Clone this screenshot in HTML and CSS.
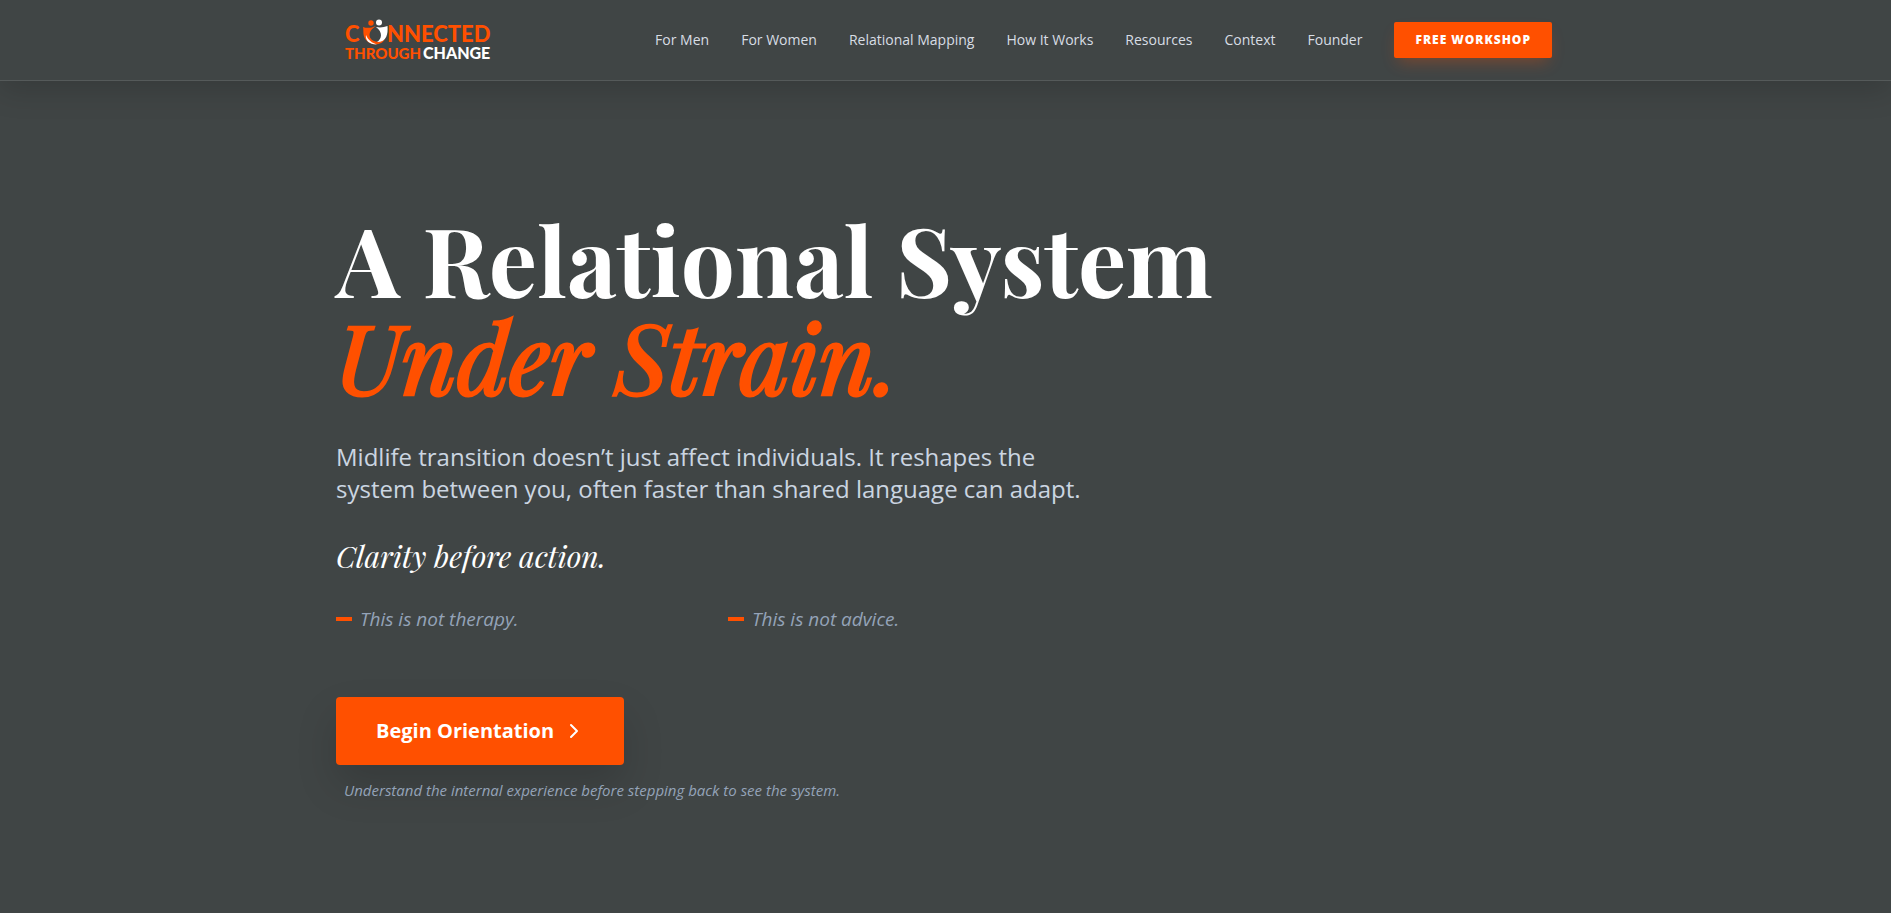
FILE: index.html
```html
<!DOCTYPE html>
<html lang="en">
<head>
    <meta charset="UTF-8">
    <meta name="viewport" content="width=device-width, initial-scale=1.0">
    <link rel="stylesheet" href="styles.css">
    <title>Connected Through Change</title>
</head>
<body>

<header class="site-header">
    <div class="container header-row">
        <a href="#" class="logo" aria-label="Connected Through Change">
            <svg width="160" height="48" viewBox="0 0 160 48">
                <g class="logo-top">
                    <text x="9" y="26">C</text>
                    <text x="51" y="26">NNECTED</text>
                </g>
                <text class="logo-bottom" x="9" y="43">THROUGH</text>
                <text class="logo-bottom light" x="87" y="43">CHANGE</text>
                <circle cx="35" cy="7" r="2.7" fill="#ff5000"/>
                <circle cx="43" cy="6.5" r="3" fill="#fff"/>
                <path d="M27 11C31 12.5 35 12 40 10C35 13 32.5 17 34 21.5C37 27 45 27 49 23C46 29.5 36 30 31 25C26 20 28 15 27 11Z" fill="#ff5000"/>
                <path d="M40 11C45 12 48 11 51.5 10C52 18 51 26 41 26C46 23 47 16 40 11Z" fill="#fff"/>
                <path d="M30 19C29 24 33 28.5 41 28.5C36 27 32 24 30 19Z" fill="#fff"/>
            </svg>
        </a>
        <nav class="nav">
            <a href="#">For Men</a>
            <a href="#">For Women</a>
            <a href="#">Relational Mapping</a>
            <a href="#">How It Works</a>
            <a href="#">Resources</a>
            <a href="#">Context</a>
            <a href="#">Founder</a>
            <a href="#" class="workshop">FREE WORKSHOP</a>
        </nav>
    </div>
</header>

<main class="hero">
    <div class="container">
        <h1>A Relational System <em>Under Strain.</em></h1>
        <p class="lead">Midlife transition doesn’t just affect individuals. It reshapes the system between you, often faster than shared language can adapt.</p>
        <p class="tagline">Clarity before action.</p>
        <ul class="nots">
            <li>This is not therapy.</li>
            <li>This is not advice.</li>
        </ul>
        <button type="button" class="begin">
            Begin Orientation
            <svg width="20" height="20" viewBox="0 0 20 20" fill="none" stroke="currentColor" stroke-width="2" stroke-linecap="round" stroke-linejoin="round">
                <path d="m7 16 6-6-6-6"/>
            </svg>
        </button>
        <p class="note">Understand the internal experience before stepping back to see the system.</p>
    </div>
</main>

</body>
</html>
```

FILE: styles.css
```css
* {
    box-sizing: border-box;
}

body {
    margin: 0;
    min-height: 100vh;
    background-color: #404545;
    color: white;
    font-family: "Open Sans", sans-serif;
}

h1, p, ul {
    margin: 0;
}

.container {
    max-width: 1280px;
    margin: 0 auto;
    padding: 0 32px;
}

.site-header,
.hero {
    padding-right: 3px;
}

.site-header {
    border-bottom: 1px solid #555a5a;
    box-shadow: 0 10px 30px rgba(0, 0, 0, 0.15);
}

.header-row {
    display: flex;
    align-items: center;
    justify-content: space-between;
    height: 80px;
}

.logo svg {
    display: block;
}

.logo text {
    font-family: Lato, sans-serif;
    font-weight: 900;
    fill: #ff5000;
}

.logo-top text {
    font-size: 22px;
}

.logo .logo-bottom {
    font-size: 15px;
}

.logo .light {
    font-size: 16px;
    fill: white;
}

.nav {
    display: flex;
    align-items: center;
    gap: 32px;
}

.nav a {
    color: #d8dde4;
    font-size: 14px;
    font-weight: 500;
    line-height: 20px;
    text-decoration: none;
}

.nav .workshop {
    padding: 10px 21px;
    border-radius: 2px;
    background-color: #ff5000;
    box-shadow: 0 8px 16px -4px rgba(255, 80, 0, 0.3);
    color: white;
    font-size: 12px;
    font-weight: 800;
    line-height: 16px;
    letter-spacing: 1px;
}

.hero {
    padding-top: 129px;
    padding-bottom: 64px;
}

h1 {
    font-family: "Playfair Display", "Liberation Serif", serif;
    font-size: 96px;
    font-weight: 700;
    line-height: 97px;
}

h1 em {
    display: block;
    color: #ff5000;
    font-weight: 400;
    -webkit-text-stroke: 3px #ff5000;
}

.lead {
    max-width: 768px;
    margin-top: 37px;
    color: #cbd5e1;
    font-size: 24px;
    line-height: 32px;
}

.tagline {
    margin-top: 31px;
    font-family: "Playfair Display", "Liberation Serif", serif;
    font-size: 30px;
    font-style: italic;
    line-height: 40px;
}

.nots {
    display: grid;
    grid-template-columns: 1fr 1fr;
    gap: 16px;
    max-width: 768px;
    margin-top: 29px;
    padding: 0;
    list-style: none;
    color: #94a3b8;
    font-size: 19px;
    font-style: italic;
    line-height: 28px;
}

.nots li {
    display: flex;
    align-items: center;
    gap: 8px;
}

.nots li::before {
    content: "";
    width: 16px;
    height: 4px;
    background-color: #ff5000;
}

.begin {
    display: flex;
    align-items: center;
    gap: 10px;
    margin-top: 64px;
    padding: 20px 40px;
    border: none;
    border-radius: 4px;
    background-color: #ff5000;
    box-shadow: 0 20px 40px rgba(0, 0, 0, 0.15);
    color: white;
    font-family: inherit;
    font-size: 20px;
    font-weight: 700;
    line-height: 28px;
    cursor: pointer;
}

.note {
    margin-top: 15px;
    padding-left: 8px;
    color: #94a3b8;
    font-size: 15px;
    font-style: italic;
    line-height: 20px;
}
```
